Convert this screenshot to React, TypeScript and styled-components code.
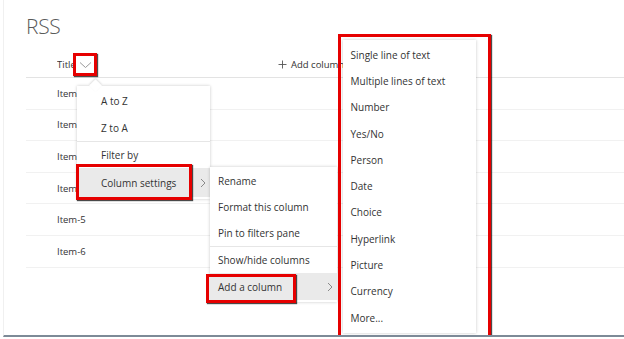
import React from 'react';
import styled, { createGlobalStyle } from 'styled-components';

const GlobalStyle = createGlobalStyle`
  html, body {
    margin: 0;
    padding: 0;
    background: #ffffff;
  }
  body {
    font-family: "Open Sans", "Noto Sans", "Liberation Sans", sans-serif;
    color: #333333;
  }
`;

const Page = styled.div`
  position: relative;
  width: 621px;
  height: 337px;
  margin-left: 3px;
  border-left: 1px solid #f0f0f0;
  border-bottom: 2px solid #7d8a97;
  overflow: hidden;
  box-sizing: border-box;
`;

const PageTitle = styled.h1`
  margin: 0;
  padding: 13px 0 0 22px;
  height: 27px;
  font-size: 21px;
  font-weight: 300;
  line-height: 27px;
  color: #5a5a5a;
  letter-spacing: -0.3px;
`;

const List = styled.div`
  margin-left: 22px;
`;

const HeaderRow = styled.div`
  display: flex;
  align-items: flex-start;
  height: 38px;
  padding-top: 13px;
  box-sizing: border-box;
  border-bottom: 1.5px solid #e3e3e3;
  font-size: 9.5px;
`;

const TitleCell = styled.div`
  display: flex;
  align-items: center;
  width: 221px;
  padding-left: 31px;
  color: #333;
`;

const TitleLabel = styled.span`
  width: 20px;
  overflow: hidden;
  white-space: nowrap;
`;

const MenuAnchor = styled.div`
  position: relative;
  margin-left: -4px;
`;

const ChevronButton = styled.div`
  position: relative;
  display: flex;
  align-items: center;
  justify-content: center;
  width: 24px;
  height: 23px;
  box-sizing: border-box;
  border: 3.5px solid #e60000;
  box-shadow: 1px 1px 1px rgba(0, 0, 0, 0.7);
  background: #ffffff;
`;

const AddColumn = styled.div`
  display: flex;
  align-items: center;
  gap: 4px;
  height: 23px;
  color: #333;
`;

const Row = styled.div`
  display: flex;
  align-items: center;
  height: 30.6px;
  padding-left: 31px;
  border-bottom: 1px solid #f1f1f1;
  font-size: 9.5px;
  color: #333;
`;

const Menu = styled.div<{ $width: number }>`
  position: absolute;
  width: ${(p) => p.$width}px;
  background: #ffffff;
  box-shadow: 0 0 3px rgba(0, 0, 0, 0.22);
  padding: 1px 0 2px;
  box-sizing: border-box;
  font-size: 10px;
  font-weight: 400;
  color: #333333;
  white-space: nowrap;
`;

const SortMenu = styled(Menu)`
  left: 4px;
  top: 33px;
`;

const SubMenu = styled(Menu)`
  left: 100%;
  top: -1px;
`;

const Beak = styled.div`
  position: absolute;
  left: 14px;
  top: -5px;
  width: 9px;
  height: 9px;
  background: #ffffff;
  transform: rotate(45deg);
  box-shadow: -1px -1px 2px rgba(0, 0, 0, 0.12);
`;

const MenuItem = styled.div<{ $height: number; $indent?: number; $active?: boolean }>`
  position: relative;
  display: flex;
  align-items: center;
  justify-content: space-between;
  height: ${(p) => p.$height}px;
  padding: 0 4px 0 ${(p) => p.$indent ?? 8}px;
  background: ${(p) => (p.$active ? '#eaeaea' : 'transparent')};
`;

const Divider = styled.div`
  height: 1px;
  background: #e6e6e6;
`;

const Chevron = styled.svg`
  flex: none;
`;

const ItemCallout = styled.div<{ $dx: number; $dy: number; $width: number; $height: number }>`
  position: absolute;
  left: ${(p) => p.$dx}px;
  top: ${(p) => p.$dy}px;
  width: ${(p) => p.$width}px;
  height: ${(p) => p.$height}px;
  border: 3.5px solid #e60000;
  box-sizing: border-box;
  box-shadow: 1px 1px 1px rgba(0, 0, 0, 0.7);
  pointer-events: none;
`;

const TypeFlyout = styled.div`
  position: absolute;
  left: calc(100% + 1px);
  top: -239px;
  width: 153px;
  height: 306px;
  box-sizing: border-box;
  padding: 2.5px 0 0 1.5px;
  border: 3.5px solid #e60000;
  box-shadow: 1px 1px 1px rgba(0, 0, 0, 0.7);
`;

const TypeMenu = styled.div`
  width: 133px;
  background: #ffffff;
  box-shadow: 0 0 3px rgba(0, 0, 0, 0.22);
  padding: 2px 0;
  box-sizing: border-box;
`;

const DownChevron = () => (
  <Chevron width="13" height="8" viewBox="0 0 13 8">
    <path d="M1 1.5 L6.5 6.5 L12 1.5" fill="none" stroke="#9a9a9a" strokeWidth="1" />
  </Chevron>
);

const RightChevron = () => (
  <Chevron width="6" height="10" viewBox="0 0 6 10">
    <path d="M1 1 L5 5 L1 9" fill="none" stroke="#8a8a8a" strokeWidth="1" />
  </Chevron>
);

const PlusIcon = () => (
  <svg width="9" height="9" viewBox="0 0 9 9">
    <path d="M4.5 0.5 V8.5 M0.5 4.5 H8.5" stroke="#555" strokeWidth="0.9" />
  </svg>
);

const rows = ['Item-1', 'Item-2', 'Item-3', 'Item-4', 'Item-5', 'Item-6'];

const columnTypes = [
  'Single line of text',
  'Multiple lines of text',
  'Number',
  'Yes/No',
  'Person',
  'Date',
  'Choice',
  'Hyperlink',
  'Picture',
  'Currency',
  'More...',
];

const App: React.FC = () => (
  <>
    <GlobalStyle />
    <Page>
      <PageTitle>RSS</PageTitle>

      <List>
        <HeaderRow>
          <TitleCell>
            <TitleLabel>Title</TitleLabel>
            <MenuAnchor>
              <ChevronButton>
                <DownChevron />
              </ChevronButton>

              <SortMenu $width={133}>
                <Beak />
                <MenuItem $height={27} $indent={24}>A to Z</MenuItem>
                <MenuItem $height={27} $indent={24}>Z to A</MenuItem>
                <Divider />
                <MenuItem $height={26} $indent={24}>Filter by</MenuItem>
                <MenuItem $height={29} $indent={24} $active>
                  Column settings
                  <RightChevron />
                  <ItemCallout $dx={-1} $dy={-4} $width={116} $height={36} />

                  <SubMenu $width={127}>
                    <MenuItem $height={26}>Rename</MenuItem>
                    <MenuItem $height={26}>Format this column</MenuItem>
                    <MenuItem $height={26}>Pin to filters pane</MenuItem>
                    <Divider />
                    <MenuItem $height={26}>Show/hide columns</MenuItem>
                    <MenuItem $height={27} $active>
                      Add a column
                      <RightChevron />
                      <ItemCallout $dx={-4} $dy={1} $width={90} $height={29} />

                      <TypeFlyout>
                        <TypeMenu>
                          {columnTypes.map((t) => (
                            <MenuItem key={t} $height={26.3}>
                              {t}
                            </MenuItem>
                          ))}
                        </TypeMenu>
                      </TypeFlyout>
                    </MenuItem>
                  </SubMenu>
                </MenuItem>
              </SortMenu>
            </MenuAnchor>
          </TitleCell>
          <AddColumn>
            <PlusIcon />
            Add column
          </AddColumn>
        </HeaderRow>
        {rows.map((r) => (
          <Row key={r}>{r}</Row>
        ))}
      </List>
    </Page>
  </>
);

export default App;
